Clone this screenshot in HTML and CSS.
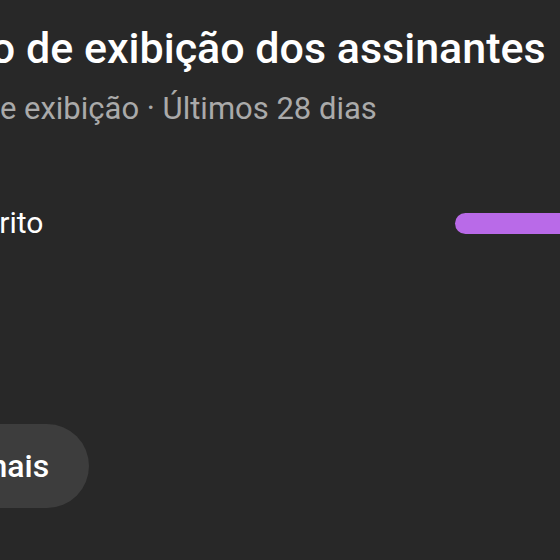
FILE: index.html
```html
<!DOCTYPE html>
<html lang="pt">
<head>
<meta charset="utf-8">
<link rel="stylesheet" href="styles.css">
</head>
<body>
<div class="viewport">
  <section class="card">
    <h1 class="title">Tempo de exibição dos assinantes</h1>
    <p class="subtitle">Tempo de exibição · Últimos 28 dias</p>
    <div class="row">
      <span class="label">Não inscrito</span>
      <div class="track"><div class="bar"></div></div>
    </div>
    <button class="more">Ver mais</button>
  </section>
</div>
</body>
</html>
```
FILE: styles.css
```css
html, body {
  margin: 0;
  padding: 0;
  background: #282828;
  overflow: hidden;
}
.viewport {
  width: 560px;
  height: 560px;
  overflow: hidden;
}
.card {
  margin-left: -118px;
  width: 800px;
  padding-top: 22px;
  font-family: Roboto, "Noto Sans", sans-serif;
  color: #fff;
}
.title {
  margin: 0;
  font-size: 43px;
  font-weight: 500;
  line-height: 52px;
  white-space: nowrap;
}
.subtitle {
  margin: 17px 0 0 -3px;
  font-size: 31px;
  font-weight: 400;
  line-height: 36px;
  color: #aaaaaa;
  white-space: nowrap;
}
.row {
  display: flex;
  align-items: center;
  margin-top: 76px;
  height: 40px;
}
.label {
  flex: 0 0 573px;
  font-size: 30px;
  line-height: 40px;
  white-space: nowrap;
}
.track {
  flex: 1;
}
.bar {
  height: 21px;
  width: 300px;
  border-radius: 11px;
  background: #b96ae8;
}
.more {
  display: block;
  margin-top: 181px;
  height: 84px;
  padding: 0 40px 0 41px;
  border: none;
  border-radius: 42px;
  background: #3d3d3d;
  color: #fff;
  font-family: Roboto, "Noto Sans", sans-serif;
  font-size: 32px;
  font-weight: 500;
}
```
